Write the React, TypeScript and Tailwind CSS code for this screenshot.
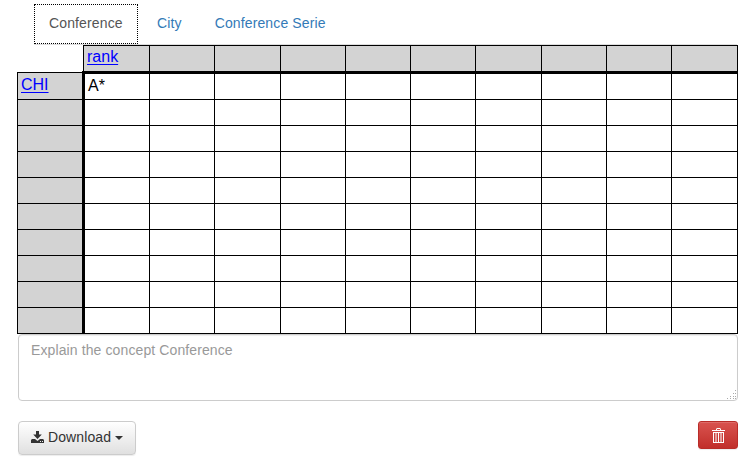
const tabs = ['Conference', 'City', 'Conference Serie'];

// pixel width of every data column
const columns = [66, 65, 66, 65, 65, 65, 66, 65, 65, 66];

const rows = [
  { name: 'CHI', rank: 'A*' },
  ...Array.from({ length: 9 }, () => ({ name: '', rank: '' })),
];

const linkClass = 'text-[#00f] underline decoration-1 underline-offset-2 [text-decoration-skip-ink:none]';

function DownloadIcon() {
  return (
    <svg width="13" height="12" viewBox="0 0 13 12" fill="currentColor">
      <path d="M5 0h3v3.5h2.8L6.5 8 2.2 3.5H5z" />
      <path
        fillRule="evenodd"
        d="M1 8h3l2.5 2L9 8h3l1 1v3H0V9zM9 10v1h1v-1zM11 10v1h1v-1z"
      />
    </svg>
  );
}

function TrashIcon() {
  return (
    <svg width="13" height="15" viewBox="0 0 13 15" fill="currentColor">
      <path d="M0 2h13v1H0z" />
      <path fillRule="evenodd" d="M4 2V1l1-1h3l1 1v1H8V1H5v1z" />
      <path
        fillRule="evenodd"
        d="M1 4h11v11H1zM2 5v9h1.5V5zM4.5 5v9H6V5zM7 5v9h1.5V5zM9.5 5v9H11V5z"
      />
    </svg>
  );
}

function Tabs() {
  return (
    <ul className="ml-[17px] mr-[15px] flex h-[41px] border-b border-[#ddd] text-sm leading-5 tracking-[0.13px]">
      {tabs.map((tab, index) => (
        <li key={tab} className={index === 0 ? 'mr-[3px]' : 'mr-px'}>
          <a
            className={
              index === 0
                ? 'block h-10 w-[104px] border border-dotted border-black bg-white px-[14px] pt-2 text-[#555]'
                : 'block h-10 px-4 pt-[9px] text-[#337ab7]'
            }
          >
            {tab}
          </a>
        </li>
      ))}
    </ul>
  );
}

function ConceptTable() {
  return (
    <table className="w-[721px] table-fixed border-collapse text-base leading-5 text-black">
      <colgroup>
        <col className="w-[66px]" />
        {columns.map((width, index) => (
          <col key={index} style={{ width }} />
        ))}
      </colgroup>
      <thead>
        <tr className="h-[27px]">
          <th />
          {columns.map((_, index) => (
            <th
              key={index}
              className="border border-b-[3px] border-black bg-[#d3d3d3] p-0 pl-[3px] pt-px text-left align-top font-normal"
            >
              {index === 0 && <a className={linkClass}>rank</a>}
            </th>
          ))}
        </tr>
      </thead>
      <tbody>
        {rows.map((row, index) => (
          <tr key={index} className={index === 0 ? 'h-[27px]' : 'h-[26px]'}>
            <th className="border border-r-[3px] border-black bg-[#d3d3d3] p-0 pb-0.5 pl-[3px] text-left font-normal">
              {row.name && <a className={linkClass}>{row.name}</a>}
            </th>
            {columns.map((_, column) => (
              <td key={column} className="border border-black p-0 pb-0.5 pl-[3px]">
                {column === 0 && row.rank}
              </td>
            ))}
          </tr>
        ))}
      </tbody>
    </table>
  );
}

export default function App() {
  return (
    <div className="h-[470px] w-[752px] overflow-hidden bg-white pl-[17px] pt-1 font-['Liberation_Sans',Arial,sans-serif]">
      <Tabs />
      <ConceptTable />
      <div className="ml-px w-[720px]">
        <div className="relative">
          <textarea
            className="block h-[67px] w-full resize-none rounded border border-[#ccc] bg-white px-3 py-[5px] text-sm leading-5 tracking-[0.11px] shadow-[inset_0_1px_1px_rgba(0,0,0,0.075)] placeholder:text-[#999]"
            placeholder="Explain the concept Conference"
          />
          {/* resize grip */}
          <svg className="absolute bottom-px right-px" width="10" height="10" fill="#aaa" shapeRendering="crispEdges">
            <path d="M8 0h1v1h-1zM8 3h1v1h-1zM6 3h1v1h-1zM8 6h1v1h-1zM6 6h1v1h-1zM3 6h1v1h-1zM8 8h1v1h-1zM6 8h1v1h-1zM3 8h1v1h-1zM0 8h1v1h-1z" />
          </svg>
        </div>
        <div className="mt-5 flex items-start justify-between">
          <button className="flex h-[34px] w-[118px] items-center rounded border border-[#ccc] bg-linear-to-b from-white to-[#e0e0e0] pb-0.5 pl-3 text-sm leading-5 text-[#333] shadow-[inset_0_1px_0_rgba(255,255,255,0.15),0_1px_1px_rgba(0,0,0,0.075)]">
            <DownloadIcon />
            <span className="ml-1 tracking-[0.1px]">Download</span>
            <span className="ml-1 mt-0.5 border-x-4 border-t-4 border-x-transparent border-t-[#333]" />
          </button>
          <button className="flex h-7 w-10 items-center justify-center rounded-[3px] border border-[#b92c28] bg-linear-to-b from-[#d9534f] to-[#c12e2a] pl-px pt-px text-white shadow-[inset_0_1px_0_rgba(255,255,255,0.15),0_1px_1px_rgba(0,0,0,0.075)]">
            <TrashIcon />
          </button>
        </div>
      </div>
    </div>
  );
}
